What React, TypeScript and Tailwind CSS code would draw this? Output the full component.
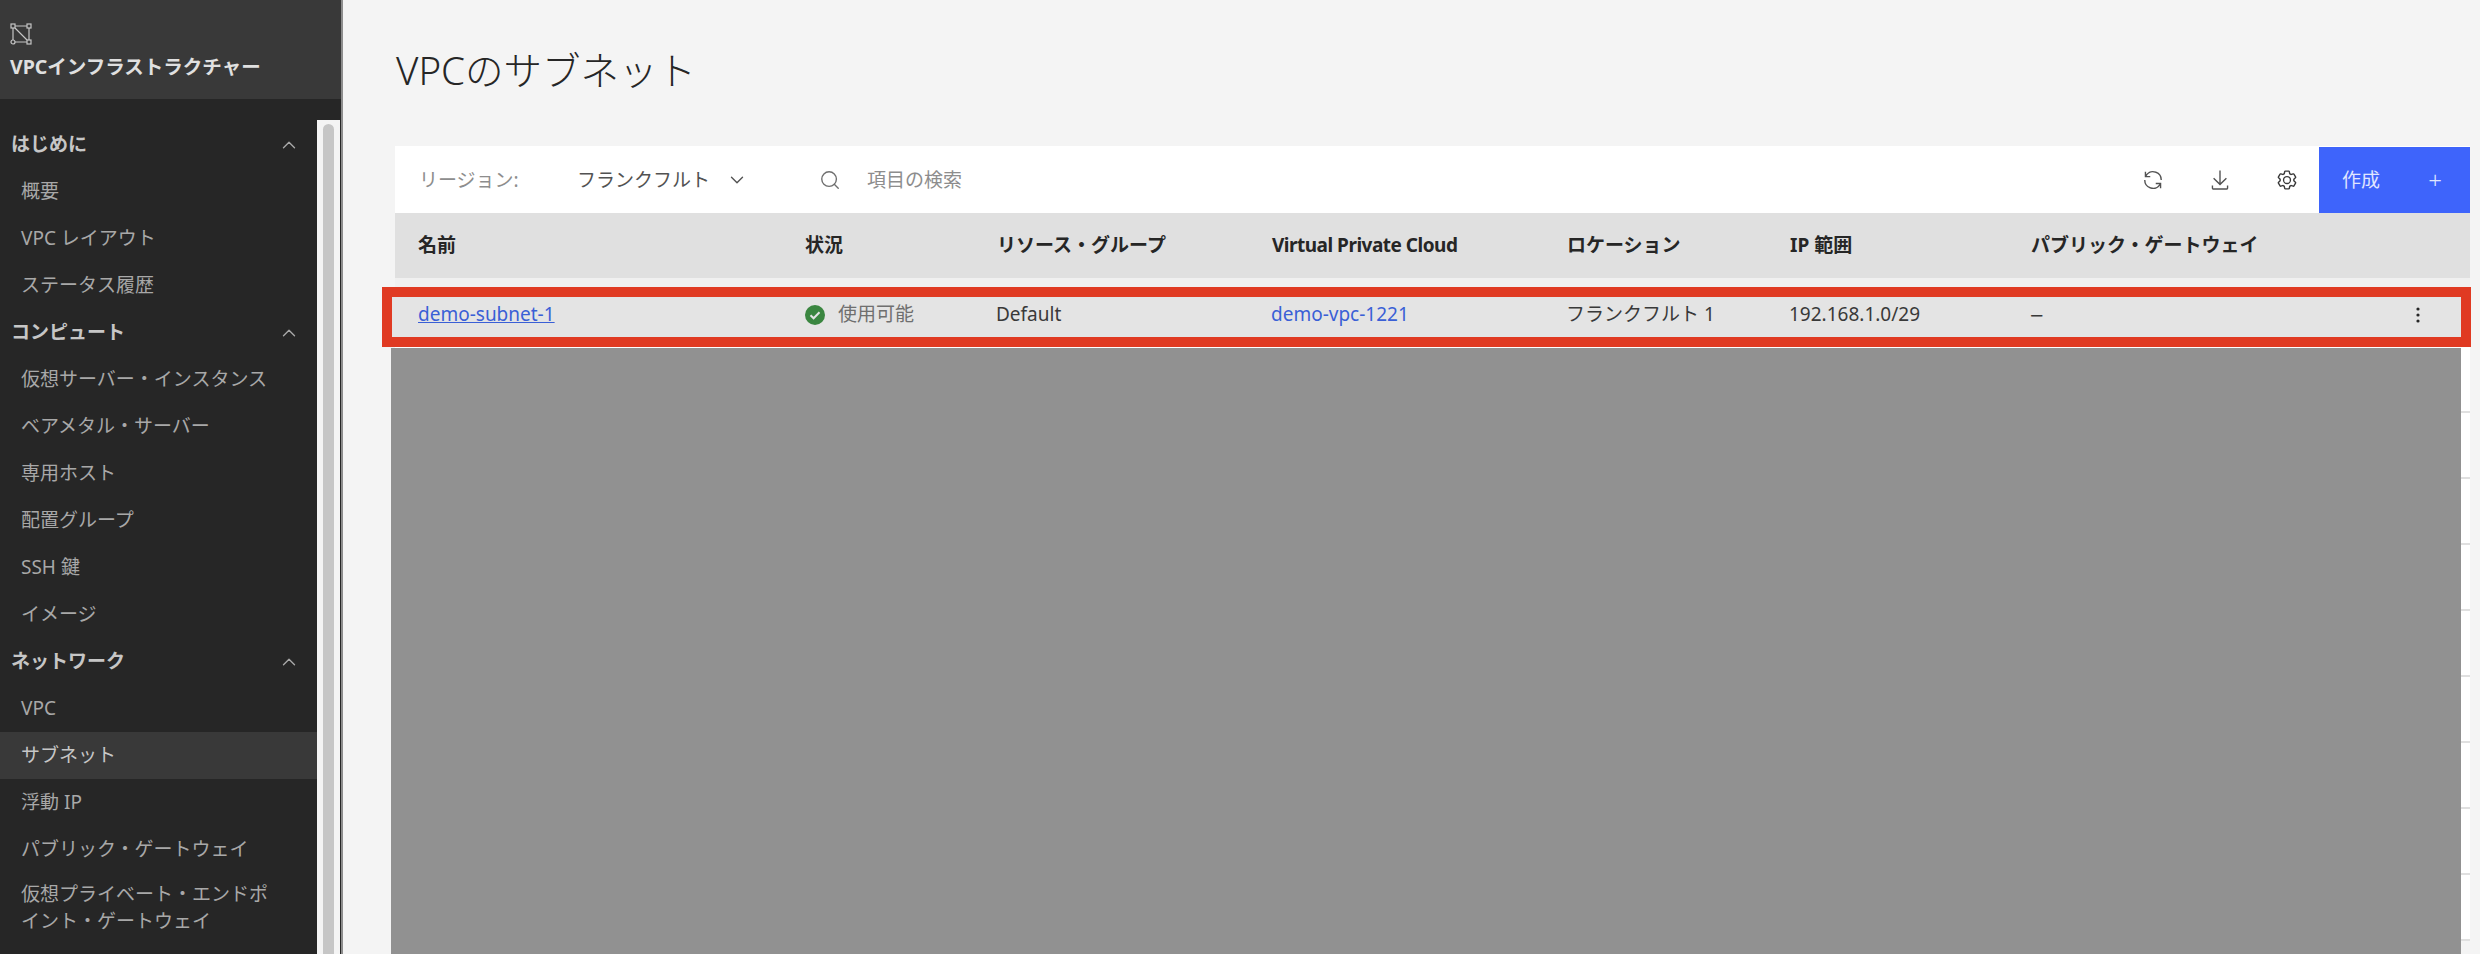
import { ChevronDown, ChevronUp, Search } from "lucide-react";

const fontStack = "font-['Noto_Sans','Noto_Sans_CJK_JP',sans-serif]";

const navSections = [
  { title: "はじめに", items: ["概要", "VPC レイアウト", "ステータス履歴"] },
  {
    title: "コンピュート",
    items: ["仮想サーバー・インスタンス", "ベアメタル・サーバー", "専用ホスト", "配置グループ", "SSH 鍵", "イメージ"],
  },
  {
    title: "ネットワーク",
    items: ["VPC", "サブネット", "浮動 IP", "パブリック・ゲートウェイ", "仮想プライベート・エンドポイント・ゲートウェイ"],
  },
];

const headers = ["状況", "リソース・グループ", "Virtual Private Cloud", "ロケーション", "IP 範囲", "パブリック・ゲートウェイ"];

const VpcLogo = () => (
  <svg width="22" height="22" viewBox="0 0 22 22" fill="none" stroke="#c6c6c6" strokeWidth="1.2">
    <rect x="1" y="1" width="4" height="4" />
    <rect x="17" y="1" width="4" height="4" />
    <rect x="17" y="17" width="4" height="4" />
    <circle cx="3" cy="19" r="2" />
    <path d="M5 3h12M19 5v12M5 19h12M3 5v12M5 5l12 12" />
  </svg>
);

const RenewIcon = () => (
  <svg width="22" height="22" viewBox="0 0 32 32" fill="#525252">
    <path d="M12 10H6.78A11 11 0 0 1 27 16h2A13 13 0 0 0 6 7.68V4H4v8h8zM20 22h5.22A11 11 0 0 1 5 16H3a13 13 0 0 0 23 8.32V28h2v-8h-8z" />
  </svg>
);

const DownloadIcon = () => (
  <svg width="22" height="22" viewBox="0 0 32 32" fill="#525252">
    <path d="M26 24v4H6v-4H4v4a2 2 0 0 0 2 2h20a2 2 0 0 0 2-2v-4zM26 14l-1.41-1.41L17 20.17V2h-2v18.17l-7.59-7.58L6 14l10 10 10-10z" />
  </svg>
);

const SettingsIcon = () => (
  <svg width="22" height="22" viewBox="0 0 32 32" fill="#393939">
    <path d="M27 16.76c0-.25 0-.5 0-.76s0-.51 0-.77l1.92-1.68A2 2 0 0 0 29.3 11l-2.36-4a2 2 0 0 0-1.73-1 2 2 0 0 0-.64.1l-2.43.82a11.35 11.35 0 0 0-1.31-.75l-.51-2.52a2 2 0 0 0-2-1.61h-4.68a2 2 0 0 0-2 1.61l-.51 2.52a11.48 11.48 0 0 0-1.32.75l-2.38-.86A2 2 0 0 0 6.79 6a2 2 0 0 0-1.73 1L2.7 11a2 2 0 0 0 .41 2.51L5 15.24c0 .25 0 .5 0 .76s0 .51 0 .77l-1.92 1.68A2 2 0 0 0 2.7 21l2.36 4a2 2 0 0 0 1.73 1 2 2 0 0 0 .64-.1l2.43-.82a11.35 11.35 0 0 0 1.31.75l.51 2.52a2 2 0 0 0 2 1.61h4.72a2 2 0 0 0 2-1.61l.51-2.52a11.48 11.48 0 0 0 1.32-.75l2.42.82a2 2 0 0 0 .64.1 2 2 0 0 0 1.73-1l2.28-4a2 2 0 0 0-.41-2.51zM25.21 24l-3.43-1.16a8.86 8.86 0 0 1-2.71 1.57L18.36 28h-4.72l-.71-3.55a9.36 9.36 0 0 1-2.7-1.57L6.79 24l-2.36-4 2.72-2.4a8.9 8.9 0 0 1 0-3.13L4.43 12l2.36-4 3.43 1.16a8.86 8.86 0 0 1 2.71-1.57L13.64 4h4.72l.71 3.55a9.36 9.36 0 0 1 2.7 1.57L25.21 8l2.36 4-2.72 2.4a8.9 8.9 0 0 1 0 3.13L27.57 20z" />
    <path d="M16 22a6 6 0 1 1 6-6 5.94 5.94 0 0 1-6 6zm0-10a3.91 3.91 0 0 0-4 4 3.91 3.91 0 0 0 4 4 3.91 3.91 0 0 0 4-4 3.91 3.91 0 0 0-4-4z" />
  </svg>
);

const CheckBadge = () => (
  <svg width="20" height="20" viewBox="0 0 20 20">
    <circle cx="10" cy="10" r="10" fill="#3a8640" />
    <path d="M5.5 10.2l3.1 3.1 5.9-6" fill="none" stroke="#e4e4e4" strokeWidth="2" />
  </svg>
);

const Sidebar = () => (
  <aside className="flex h-full w-[343px] shrink-0 flex-col border-r-2 border-[#8d8d8d] bg-[#262626]">
    <div className="flex h-[99px] shrink-0 flex-col justify-start bg-[#393939] pl-[10px] pt-[23px]">
      <VpcLogo />
      <div className="mt-[9px] text-[19.5px] font-bold leading-[26px] text-[#e0e0e0]">VPCインフラストラクチャー</div>
    </div>
    <div className="relative flex min-h-0 flex-1">
      <nav className="w-[317px] shrink-0 overflow-hidden pt-[22px]">
        {navSections.map((section) => (
          <div key={section.title}>
            <div className="flex h-[47px] items-center justify-between pl-[11px] pr-[17px] text-[19px] font-bold text-[#c6c6c6]">
              {section.title}
              <ChevronUp size={22} strokeWidth={1.5} className="text-[#a8a8a8]" />
            </div>
            {section.items.map((item) => (
              <div
                key={item}
                className={`flex min-h-[47px] items-center pl-[21px] pr-[40px] text-[19px] leading-[27px] text-[#a8a8a8] ${
                  item === "サブネット" ? "bg-[#393939] text-[#c6c6c6]" : ""
                } ${item.length > 20 ? "pt-[8px]" : ""}`}
              >
                {item}
              </div>
            ))}
          </div>
        ))}
      </nav>
      <div className="mr-px mt-[21px] w-[23px] shrink-0 bg-[#f4f4f4] px-[6px] pt-[4px]">
        <div className="h-full rounded-t-[6px] bg-[#c6c6c6]" />
      </div>
    </div>
  </aside>
);

const SubnetRow = () => (
  <div className="relative z-10 -ml-[13px] -mr-px grid h-[60px] grid-cols-[413px_191px_275px_295px_223px_241px_378px_1fr] items-center border-[10px] border-[#e03a22] bg-[#e4e4e4] pb-[5px] text-[19px] text-[#393939]">
    <a className="pl-[26px] text-[#3a5fd6] underline">demo-subnet-1</a>
    <div className="flex items-center gap-[13px] text-[#6f6f6f]">
      <CheckBadge />
      使用可能
    </div>
    <div>Default</div>
    <a className="text-[#3a5fd6]">demo-vpc-1221</a>
    <div>フランクフルト 1</div>
    <div>192.168.1.0/29</div>
    <div className="text-[24px] leading-none">−</div>
    <svg width="20" height="20" viewBox="0 0 20 20" fill="#262626">
      <circle cx="10" cy="4" r="1.6" />
      <circle cx="10" cy="10" r="1.6" />
      <circle cx="10" cy="16" r="1.6" />
    </svg>
  </div>
);

export default function App() {
  return (
    <div className={`flex h-[954px] w-[2480px] overflow-hidden bg-[#f4f4f4] ${fontStack}`}>
      <Sidebar />
      <main className="flex min-w-0 flex-1 flex-col pl-[52px] pr-[10px]">
        <h1 className="flex h-[146px] shrink-0 items-start pl-[1px] pt-[43px] text-[38.5px] font-light leading-[54px] text-[#262626]">
          VPCのサブネット
        </h1>
        <div className="flex h-[67px] shrink-0 items-center bg-white pl-[24px] pt-[1px] text-[19px]">
          <span className="w-[158px] text-[#8d8d8d]">リージョン:</span>
          <span className="text-[#525252]">フランクフルト</span>
          <ChevronDown size={22} strokeWidth={1.5} className="ml-[16px] text-[#525252]" />
          <Search size={22} strokeWidth={1.5} className="ml-[71px] text-[#6f6f6f]" />
          <span className="ml-[26px] text-[#8d8d8d]">項目の検索</span>
          <div className="ml-auto flex items-center gap-[45px]">
            <RenewIcon />
            <DownloadIcon />
            <SettingsIcon />
            <button className="ml-[-24px] flex h-[67px] w-[151px] items-center justify-between bg-[#3e64fb] pl-[23px] pr-[28px] text-[19px] text-[#e0e6ff]">
              作成
              <span className="text-[24px] font-light">+</span>
            </button>
          </div>
        </div>
        <div className="grid h-[65px] shrink-0 grid-cols-[410px_192px_275px_295px_223px_241px_1fr] items-center bg-[#e0e0e0] pb-[1px] text-[19px] font-bold text-[#262626]">
          <div className="pl-[23px]">名前</div>
          {headers.map((label) => (
            <div key={label} className={label === "Virtual Private Cloud" ? "tracking-[-0.5px]" : ""}>
              {label}
            </div>
          ))}
        </div>
        <div className="h-[9px] shrink-0 bg-[#f0f0f0]" />
        <div className="relative min-h-0 flex-1">
          <SubnetRow />
          <div className="bg-white">
            {Array.from({ length: 9 }).map((_, i) => (
              <div key={i} className="h-[66px] border-b-2 border-[#e0e0e0]" />
            ))}
          </div>
          {/* dimmed area that covers the remaining rows */}
          <div className="absolute -left-[4px] bottom-0 right-[9px] top-[61px] bg-[#919191]" />
        </div>
      </main>
    </div>
  );
}
